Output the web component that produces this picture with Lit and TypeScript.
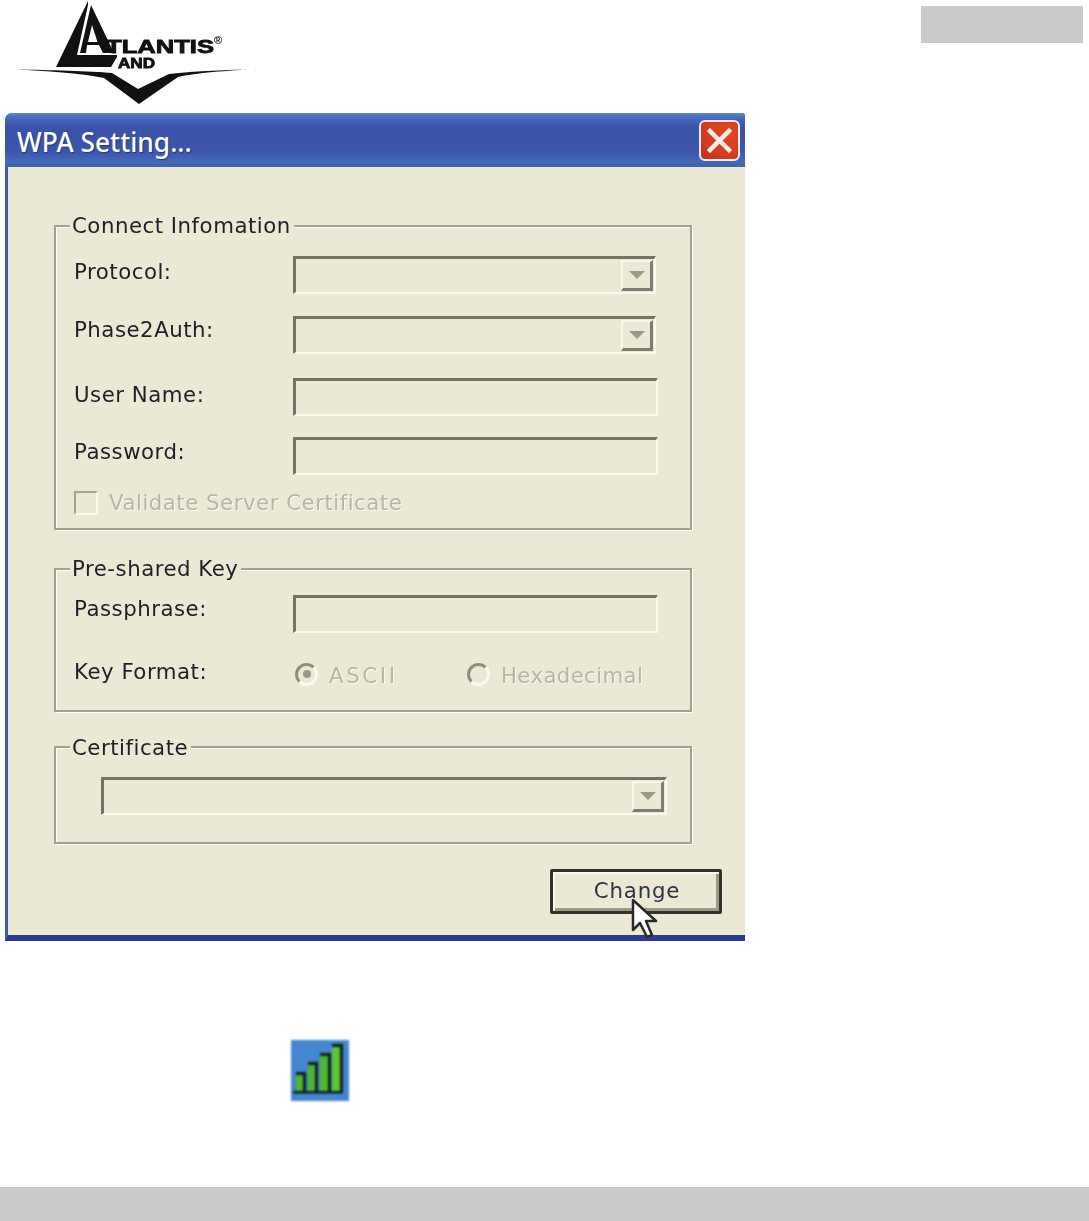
import { LitElement, html, css } from "lit";
import { customElement } from "lit/decorators.js";

@customElement("app-root")
export class AppRoot extends LitElement {
  static styles = css`
    :host { display: flex; flex-direction: column; height: 1221px; background: #fff; font-family: "DejaVu Sans", sans-serif; overflow: hidden; }
    .head { display: flex; justify-content: space-between; align-items: flex-start; height: 113px; padding: 0 6px 0 14px; box-sizing: border-box; flex: none; }
    .logo { display: block; filter: blur(.5px); }
    .logo text { font-family: "Liberation Sans", sans-serif; font-weight: 700; fill: #111; stroke: #111; stroke-width: .8px; }
    .logo text.reg { stroke: none; }
    .tab { width: 162px; height: 37px; margin-top: 6px; background: #cbcbcb; }
    .dialog { width: 740px; height: 828px; margin-left: 5px; flex: none; box-sizing: border-box; position: relative; display: flex; flex-direction: column; background: #ebe8d4; border-left: 3px solid #3f5bb0; border-bottom: 6px solid #2b3a92; border-radius: 7px 2px 0 0; filter: blur(.7px); }
    .title { height: 54px; margin-left: -3px; flex: none; display: flex; align-items: center; justify-content: space-between; padding: 0 5px 0 12px; box-sizing: border-box; border-radius: 7px 2px 0 0;
      background: linear-gradient(#5a86cc 0, #4669bd 5px, #3a53a8 14px, #3a55ab 38px, #4468b8 48px, #3f62b0 54px); }
    .title span { color: #fff; font: 500 26.3px/1 "Noto Sans", sans-serif; text-shadow: 1px 1px 1px #26357f; margin-top: 4px; }
    .close { width: 41px; height: 41px; box-sizing: border-box; border: 2px solid #f1ece6; border-radius: 6px; background: radial-gradient(circle at 70% 30%, #e4471f, #d23c22 60%, #b9321f); margin-top: 1px; display: block; }
    .close svg { display: block; }
    .body { flex: 1; padding: 58px 0 0 46px; font-size: 21.3px; letter-spacing: .5px; color: #1f1f28; }
    .group { position: relative; width: 638px; box-sizing: border-box; border: 2px solid #a3a28e; box-shadow: 1px 1px 0 #fff, inset 1px 1px 0 #fff; padding-left: 18px; }
    .legend { position: absolute; left: 14px; top: -13px; padding: 0 3px 0 2px; line-height: 24px; background: #ebe8d4; }
    .g1 { height: 305px; padding-top: 29px; }
    .g2 { height: 144px; padding-top: 25px; margin-top: 38px; }
    .g3 { height: 98px; padding-top: 29px; margin-top: 34px; padding-left: 45px; }
    .g3 .legend { top: -12px; }
    .row { display: grid; grid-template-columns: 219px auto; align-items: start; line-height: 24px; }
    .r2 { margin-top: 22px; }
    .r3 { margin-top: 24px; }
    .r4 { margin-top: 21px; }
    .o1 { margin-top: 1px; } .o2 { margin-top: 2px; } .o3 { margin-top: 3px; } .o4 { margin-top: 4px; } .o5 { margin-top: 5px; }
    .field { width: 365px; height: 38px; box-sizing: border-box; border-style: solid; border-width: 3px 2px 2px 3px; border-color: #747362 #fbf9ee #fbf9ee #747362; display: flex; justify-content: flex-end; }
    .wide { width: 566px; }
    .combo { width: 363px; }
    .arrow { width: 32px; height: 31px; box-sizing: border-box; margin: 1px 1px 0 0; background: #ebe8d4; border-style: solid; border-width: 2px 3px 3px 2px; border-color: #f9f7ec #7e7d6e #7e7d6e #f9f7ec; display: flex; align-items: center; justify-content: center; }
    .arrow i { display: block; width: 0; height: 0; border-style: solid; border-width: 8px 8px 0; border-color: #9a9986 transparent transparent; }
    .dis { color: #b8b5a2; text-shadow: 1px 1px 0 #fbf9ee; }
    .check { display: flex; align-items: center; margin-top: 15px; }
    .box { width: 24px; height: 24px; box-sizing: border-box; border-style: solid; border-width: 2px; border-color: #a5a493 #fbf9ee #fbf9ee #a5a493; margin-right: 11px; }
    .radios { display: flex; align-items: center; margin: 1px 0 0 2px; letter-spacing: .35px; }
    .radio { width: 23px; height: 23px; box-sizing: border-box; border-radius: 50%; border-style: solid; border-width: 3px; border-color: #8f8e7d #fbf9ee #fbf9ee #8f8e7d; margin-right: 11px; display: flex; align-items: center; justify-content: center; flex: none; }
    .radio i { display: block; width: 8px; height: 8px; border-radius: 50%; background: #989786; }
    .tx { margin-top: 4px; }
    .ascii { width: 138px; letter-spacing: 2.6px; }
    .k { margin-top: 26px; }
    .foot { display: flex; justify-content: flex-end; padding-right: 23px; margin-top: 25px; }
    .btn { width: 172px; height: 45px; box-sizing: border-box; border: 3px solid #33332b; border-radius: 2px; background: #ebe8d4; box-shadow: inset 2px 2px 0 #fbfaf2, inset -3px -3px 0 #9c9a87; display: flex; align-items: center; justify-content: center; color: #2d3348; letter-spacing: .8px; padding: 0 0 3px 2px; }
    .cursor { position: absolute; left: 622px; top: 785px; display: block; }
    .signal { display: block; margin: 99px 0 0 291px; flex: none; filter: blur(.8px); }
    .bottom { margin-top: auto; height: 34px; background: #cbcbcb; flex: none; }
  `;

  render() {
    const arrow = html`<div class="arrow"><i></i></div>`;
    return html`
      <div class="head">
        <svg class="logo" width="250" height="106" viewBox="14 0 250 106">
          <path d="M88 1 L56 67 H111 L117 57 V55 H77 L88 5 Z" fill="#111"/>
          <path fill-rule="evenodd" d="M91 5 L114 53 H103 L99 45 H87 L86 53 H80 Z M92 25 L88 42 H97.5 Z" fill="#111"/>
          <path d="M16 69.5 C50 70 90 71 112 73 L138 89 L169 74 C195 71 230 70 257 69 C228 70.5 195 73 178 77 L139 104 L104 78 C80 73 45 71 16 69.5 Z" fill="#111"/>
          <text x="106" y="53" font-size="19" textLength="108" lengthAdjust="spacingAndGlyphs">TLANTIS</text>
          <text class="reg" x="214" y="44" font-size="11">®</text>
          <text x="118" y="68" font-size="14" textLength="37" lengthAdjust="spacingAndGlyphs">AND</text>
        </svg>
        <div class="tab"></div>
      </div>
      <div class="dialog">
        <div class="title">
          <span>WPA Setting...</span>
          <div class="close">
            <svg width="37" height="37" viewBox="0 0 37 37"><path d="M9 9 L28 28 M28 9 L9 28" stroke="#fbeee8" stroke-width="4.5" stroke-linecap="square"/></svg>
          </div>
        </div>
        <div class="body">
          <div class="group g1">
            <div class="legend">Connect Infomation</div>
            <div class="row"><div class="o4">Protocol:</div><div class="field combo">${arrow}</div></div>
            <div class="row r2"><div class="o2">Phase2Auth:</div><div class="field combo">${arrow}</div></div>
            <div class="row r3"><div class="o5">User Name:</div><div class="field"></div></div>
            <div class="row r4"><div class="o3">Password:</div><div class="field"></div></div>
            <div class="check dis"><div class="box"></div>Validate Server Certificate</div>
          </div>
          <div class="group g2">
            <div class="legend">Pre-shared Key</div>
            <div class="row"><div class="o2">Passphrase:</div><div class="field"></div></div>
            <div class="row k">
              <div class="o1">Key Format:</div>
              <div class="radios dis"><div class="radio"><i></i></div><div class="ascii tx">ASCII</div><div class="radio"></div><div class="tx">Hexadecimal</div></div>
            </div>
          </div>
          <div class="group g3">
            <div class="legend">Certificate</div>
            <div class="field wide">${arrow}</div>
          </div>
          <div class="foot"><div class="btn">Change</div></div>
        </div>
        <svg class="cursor" width="30" height="44" viewBox="0 0 30 44">
          <path d="M3 2 V32 L10 25 L17 39 L22 37 L16 23 H26 Z" fill="#fff" stroke="#2a2a2a" stroke-width="2.5" stroke-linejoin="round"/>
        </svg>
      </div>
      <svg class="signal" width="58" height="61" viewBox="0 0 58 61">
        <rect width="58" height="61" fill="#4486d0"/>
        <rect x="5" y="32" width="10" height="20" fill="#111a18"/><rect x="5" y="35" width="7" height="17" fill="#4db82e"/>
        <rect x="17" y="22" width="10" height="30" fill="#111a18"/><rect x="17" y="25" width="7" height="27" fill="#4db82e"/>
        <rect x="29" y="13" width="11" height="39" fill="#111a18"/><rect x="29" y="16" width="8" height="36" fill="#4db82e"/>
        <rect x="41" y="4" width="11" height="48" fill="#111a18"/><rect x="41" y="7" width="8" height="45" fill="#5cc62f"/>
        <rect x="2" y="51" width="50" height="2.5" fill="#111a18"/>
      </svg>
      <div class="bottom"></div>
    `;
  }
}
